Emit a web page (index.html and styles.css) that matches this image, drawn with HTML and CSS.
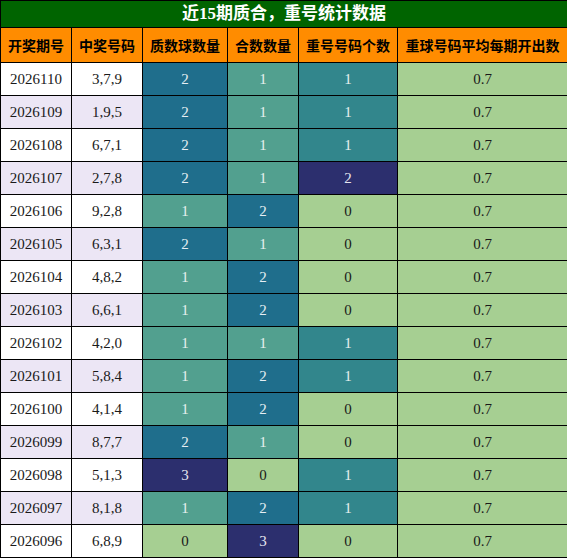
FILE: index.html
```html
<!DOCTYPE html>
<html lang="zh-CN">
<head>
    <meta charset="UTF-8">
    <title>近15期质合，重号统计数据</title>
    <link rel="stylesheet" href="styles.css">
</head>
<body>
    <table class="stats">
        <colgroup>
            <col class="c-issue">
            <col class="c-nums">
            <col class="c-prime">
            <col class="c-comp">
            <col class="c-rep">
            <col class="c-avg">
        </colgroup>
        <thead>
            <tr class="title-row">
                <th colspan="6">近15期质合，重号统计数据</th>
            </tr>
            <tr class="head-row">
                <th>开奖期号</th>
                <th>中奖号码</th>
                <th>质数球数量</th>
                <th>合数数量</th>
                <th>重号号码个数</th>
                <th>重球号码平均每期开出数</th>
            </tr>
        </thead>
        <tbody>
            <tr><td>2026110</td><td>3,7,9</td><td class="s2">2</td><td class="s1">1</td><td class="r1">1</td><td class="s0">0.7</td></tr>
            <tr class="alt"><td>2026109</td><td>1,9,5</td><td class="s2">2</td><td class="s1">1</td><td class="r1">1</td><td class="s0">0.7</td></tr>
            <tr><td>2026108</td><td>6,7,1</td><td class="s2">2</td><td class="s1">1</td><td class="r1">1</td><td class="s0">0.7</td></tr>
            <tr class="alt"><td>2026107</td><td>2,7,8</td><td class="s2">2</td><td class="s1">1</td><td class="s3">2</td><td class="s0">0.7</td></tr>
            <tr><td>2026106</td><td>9,2,8</td><td class="s1">1</td><td class="s2">2</td><td class="s0">0</td><td class="s0">0.7</td></tr>
            <tr class="alt"><td>2026105</td><td>6,3,1</td><td class="s2">2</td><td class="s1">1</td><td class="s0">0</td><td class="s0">0.7</td></tr>
            <tr><td>2026104</td><td>4,8,2</td><td class="s1">1</td><td class="s2">2</td><td class="s0">0</td><td class="s0">0.7</td></tr>
            <tr class="alt"><td>2026103</td><td>6,6,1</td><td class="s1">1</td><td class="s2">2</td><td class="s0">0</td><td class="s0">0.7</td></tr>
            <tr><td>2026102</td><td>4,2,0</td><td class="s1">1</td><td class="s1">1</td><td class="r1">1</td><td class="s0">0.7</td></tr>
            <tr class="alt"><td>2026101</td><td>5,8,4</td><td class="s1">1</td><td class="s2">2</td><td class="r1">1</td><td class="s0">0.7</td></tr>
            <tr><td>2026100</td><td>4,1,4</td><td class="s1">1</td><td class="s2">2</td><td class="s0">0</td><td class="s0">0.7</td></tr>
            <tr class="alt"><td>2026099</td><td>8,7,7</td><td class="s2">2</td><td class="s1">1</td><td class="s0">0</td><td class="s0">0.7</td></tr>
            <tr><td>2026098</td><td>5,1,3</td><td class="s3">3</td><td class="s0">0</td><td class="r1">1</td><td class="s0">0.7</td></tr>
            <tr class="alt"><td>2026097</td><td>8,1,8</td><td class="s1">1</td><td class="s2">2</td><td class="r1">1</td><td class="s0">0.7</td></tr>
            <tr><td>2026096</td><td>6,8,9</td><td class="s0">0</td><td class="s3">3</td><td class="s0">0</td><td class="s0">0.7</td></tr>
        </tbody>
    </table>
</body>
</html>
```

FILE: styles.css
```css
* {
    margin: 0;
    padding: 0;
    box-sizing: border-box;
}

body {
    background: #ffffff;
    font-family: 'Liberation Serif', 'Noto Sans CJK SC', serif;
}

.stats {
    border-collapse: collapse;
    table-layout: fixed;
    width: 567px;
}

.c-issue { width: 71px; }
.c-nums { width: 71px; }
.c-prime { width: 85px; }
.c-comp { width: 71px; }
.c-rep { width: 99px; }
.c-avg { width: 170px; }

.stats th,
.stats td {
    border: 1px solid #000000;
    text-align: center;
    vertical-align: middle;
    white-space: nowrap;
    overflow: hidden;
}

.title-row th {
    height: 27px;
    background: #006400;
    color: #ffffff;
    font-size: 17px;
    font-weight: bold;
    line-height: 24px;
}

.head-row th {
    height: 35px;
    background: #ff8c00;
    color: #000000;
    font-family: 'Noto Sans CJK SC', sans-serif;
    font-size: 14px;
    font-weight: bold;
}

.stats td {
    height: 33px;
    font-size: 15px;
    color: #1a1a1a;
    background: #ffffff;
}

.stats tr.alt td {
    background: #ece6f5;
}

/* colour scale per value */
.stats td.s0,
.stats tr.alt td.s0 {
    background: #a6cf92;
    color: #1a1a1a;
}

.stats td.s1,
.stats tr.alt td.s1 {
    background: #52a08f;
    color: #e6f0ee;
}

.stats td.r1,
.stats tr.alt td.r1 {
    background: #32868c;
    color: #e6f0ee;
}

.stats td.s2,
.stats tr.alt td.s2 {
    background: #1f6e8c;
    color: #e6eef4;
}

.stats td.s3,
.stats tr.alt td.s3 {
    background: #2c2f6e;
    color: #e6e6f0;
}
```
